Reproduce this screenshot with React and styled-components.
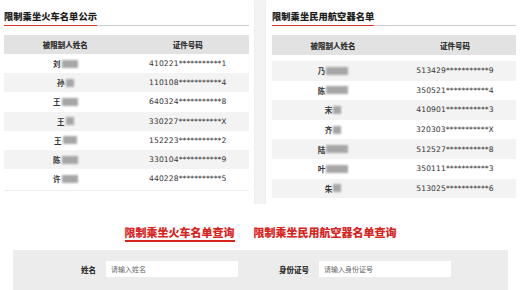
import React from 'react';
import styled, { createGlobalStyle } from 'styled-components';

const Global = createGlobalStyle`
  html, body { margin: 0; padding: 0; background: #f3f3f3; }
  body {
    font-family: "Liberation Sans", "Noto Sans CJK SC", sans-serif;
    width: 520px; height: 290px; overflow: hidden; color: #333;
  }
`;

const Page = styled.div`
  width: 520px; height: 290px;
  display: flex; flex-direction: column;
`;

const Top = styled.div`
  display: flex; gap: 12px; height: 204px;
`;

const Card = styled.section`
  background: #fff;
  flex: 0 0 ${p => p.$w}px;
  box-sizing: border-box;
  padding: 8px ${p => p.$pr}px 0 ${p => p.$pl}px;
  box-shadow: 0 1px 2px rgba(0,0,0,0.06);
  display: flex; flex-direction: column;
`;

const TitleRow = styled.div`
  height: 17px;
  border-bottom: 1px solid #c9cdd2;
  display: flex;
`;

const Title = styled.h2`
  margin: 0 0 -1px;
  font-family: "Noto Sans CJK SC", sans-serif;
  font-size: 9.3px; font-weight: 900; line-height: 17px;
  color: #1e1e1e;
  border-bottom: 1px solid #d9322a;
`;

const HeadRow = styled.div`
  margin-top: 9px;
  height: ${p => p.$h}px;
  margin-bottom: ${p => p.$gap}px;
  background: #e2e2e2;
  display: grid; grid-template-columns: 1fr 1fr;
  align-items: center; text-align: center;
  font-family: "Noto Sans CJK SC", sans-serif;
  font-size: 7.5px; font-weight: 900; color: #333;
`;

const Row = styled.div`
  height: ${p => p.$h}px;
  background: ${p => (p.$alt ? '#f3f3f3' : '#fff')};
  display: grid; grid-template-columns: 1fr 1fr;
  align-items: center; text-align: center;
`;

const NameCell = styled.div`
  display: flex; justify-content: center; align-items: center;
  font-family: "Noto Sans CJK SC", sans-serif;
  font-size: 7.5px; font-weight: 700; color: #333;
`;

const Blur = styled.span`
  display: inline-block;
  width: ${p => p.$w}px; height: 8px;
  margin-left: 1px;
  background: #a6a6a6;
  filter: blur(1.3px);
`;

const IdCell = styled.div`
  font-family: "DejaVu Sans", "Liberation Sans", sans-serif;
  font-size: 7.6px; color: #333; letter-spacing: 0.1px;
`;

const TableEnd = styled.div`
  margin-top: 2px;
  border-bottom: 1px solid #eceeef;
`;

const Bottom = styled.div`
  flex: 1;
  background: #fff;
  display: flex; flex-direction: column;
`;

const Tabs = styled.nav`
  margin-top: 21px;
  display: flex; justify-content: center; gap: 19px;
  padding-left: 1px;
`;

const Tab = styled.a`
  font-family: "Noto Sans CJK SC", sans-serif;
  font-size: 11px; font-weight: 900; line-height: 14px;
  color: #d8241c; text-decoration: none;
  padding-bottom: 1px;
  border-bottom: 2px solid ${p => (p.$active ? '#d8241c' : 'transparent')};
`;

const FormBox = styled.div`
  margin: 8px 12px 0 13px;
  flex: 1;
  background: #ececec;
  display: flex; align-items: flex-start;
  padding: 11px 0 0 13px;
  gap: 1px;
`;

const Field = styled.label`
  display: flex; align-items: center; gap: 10px;
`;

const Label = styled.span`
  width: 70px; text-align: right;
  font-family: "Noto Sans CJK SC", sans-serif;
  font-size: 7.5px; font-weight: 900; color: #333;
`;

const Input = styled.input`
  width: 132px; height: 16px; box-sizing: border-box;
  border: none; outline: none; background: #fff;
  padding: 0 5px;
  font-family: "Noto Sans CJK SC", sans-serif;
  font-size: 7px;
  &::placeholder { color: #666; }
`;

const trainRows = [
  ['刘', 16, '410221***********1'],
  ['孙', 8, '110108***********4'],
  ['王', 16, '640324***********8'],
  ['王', 8, '330227***********X'],
  ['王', 14, '152223***********2'],
  ['陈', 16, '330104***********9'],
  ['许', 16, '440228***********5'],
];

const planeRows = [
  ['乃', 22, '513429***********9'],
  ['陈', 22, '350521***********4'],
  ['宋', 8, '410901***********3'],
  ['齐', 8, '320303***********X'],
  ['陆', 22, '512527***********8'],
  ['叶', 22, '350111***********3'],
  ['朱', 8, '513025***********6'],
];

function ListCard({ title, rows, w, pl, pr, headH, gap, rowH, altOdd, end }) {
  return (
    <Card $w={w} $pl={pl} $pr={pr}>
      <TitleRow><Title>{title}</Title></TitleRow>
      <HeadRow $h={headH} $gap={gap}>
        <div>被限制人姓名</div>
        <div>证件号码</div>
      </HeadRow>
      {rows.map(([n, bw, id], i) => (
        <Row key={i} $h={rowH} $alt={altOdd ? i % 2 === 0 : i % 2 === 1}>
          <NameCell>{n}<Blur $w={bw} /></NameCell>
          <IdCell>{id}</IdCell>
        </Row>
      ))}
      {end && <TableEnd />}
    </Card>
  );
}

export default function App() {
  return (
    <Page>
      <Global />
      <Top>
        <ListCard title="限制乘坐火车名单公示" rows={trainRows} w={254} pl={4} pr={5}
          headH={19} gap={0} rowH={19.2} altOdd={false} end />
        <ListCard title="限制乘坐民用航空器名单" rows={planeRows} w={254} pl={6} pr={4}
          headH={20} gap={6} rowH={19.6} altOdd />
      </Top>
      <Bottom>
        <Tabs>
          <Tab $active href="#">限制乘坐火车名单查询</Tab>
          <Tab href="#">限制乘坐民用航空器名单查询</Tab>
        </Tabs>
        <FormBox>
          <Field><Label>姓名</Label><Input placeholder="请输入姓名" /></Field>
          <Field><Label>身份证号</Label><Input placeholder="请输入身份证号" /></Field>
        </FormBox>
      </Bottom>
    </Page>
  );
}
